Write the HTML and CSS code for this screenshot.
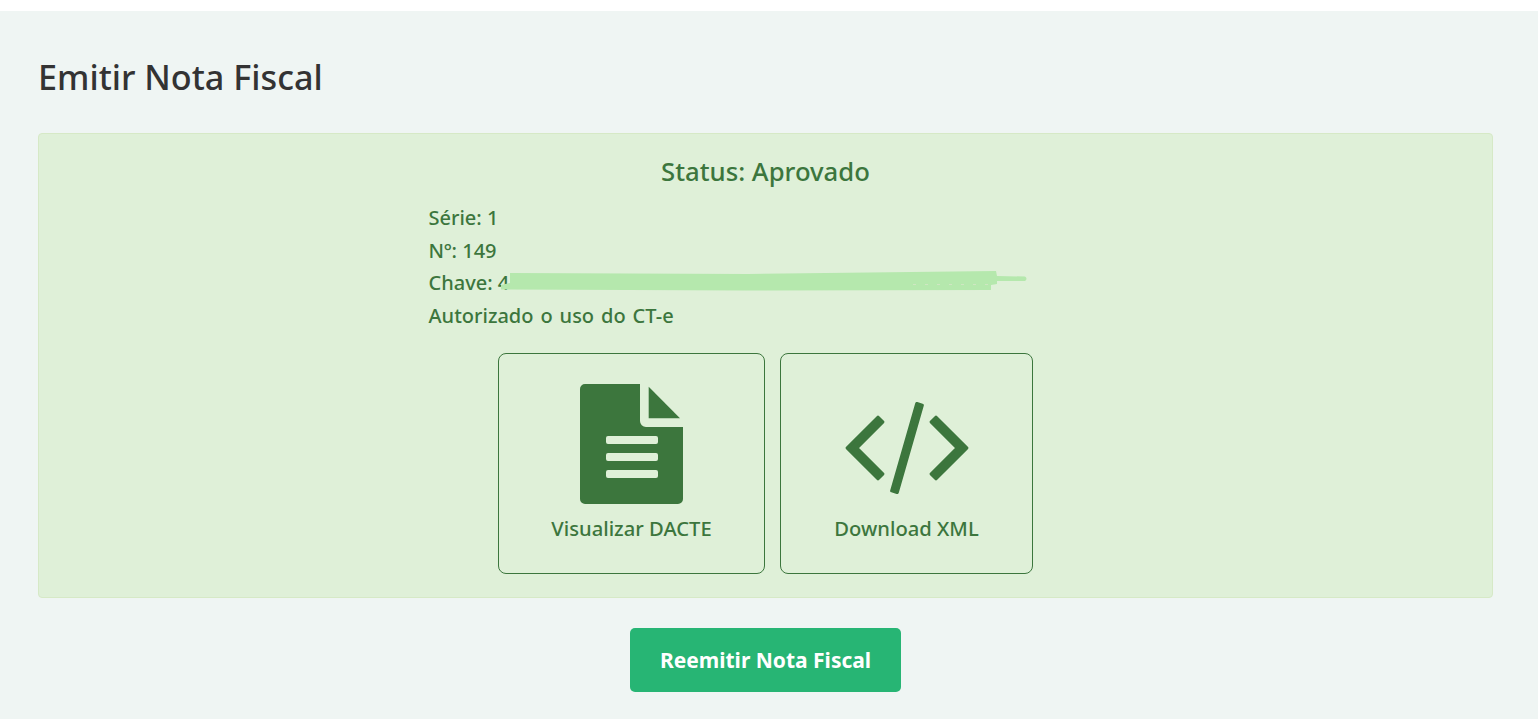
FILE: index.html
```html
<!DOCTYPE html>
<html lang="en">
<head>
  <meta charset="UTF-8">
  <meta name="viewport" content="width=device-width, initial-scale=1.0">
  <title>Emitir Nota Fiscal</title>
  <link rel="stylesheet" href="styles.css">
</head>
<body>
  <div class="page">
    <h1>Emitir Nota Fiscal</h1>
    <div class="alert-success">
      <h2>Status: Aprovado</h2>
      <div class="info">
        <p>Série: 1</p>
        <p>Nº: 149</p>
        <p class="chave">Chave: 4
          <svg class="smear" width="530" height="20" viewBox="0 0 530 20">
            <path d="M12 2 L250 3 L498 0 L499 5 L527 5.5 Q530 7.5 527 10 L499 10 L499 13 L493 14 L493 19 L250 19.5 L3 18.5 L3 14 L12 12 Z"/>
            <path class="smear-dots" d="M415 13.5H490"/>
          </svg>
        </p>
        <p class="autorizado">Autorizado o uso do CT-e</p>
      </div>
      <div class="downloads">
        <a class="doc-btn dacte" href="#">
          <svg class="icon" width="103" height="120" viewBox="0 0 103 120">
            <path fill-rule="evenodd" d="M5 0H60V37a6 6 0 0 0 6 6H103V115a5 5 0 0 1-5 5H5a5 5 0 0 1-5-5V5a5 5 0 0 1 5-5ZM28 52a2 2 0 0 0-2 2v4a2 2 0 0 0 2 2H76a2 2 0 0 0 2-2v-4a2 2 0 0 0-2-2ZM28 69a2 2 0 0 0-2 2v4a2 2 0 0 0 2 2H76a2 2 0 0 0 2-2v-4a2 2 0 0 0-2-2ZM28 86a2 2 0 0 0-2 2v4a2 2 0 0 0 2 2H76a2 2 0 0 0 2-2v-4a2 2 0 0 0-2-2Z"/>
            <path d="M68.7 2.7 100 34.3H68.7Z"/>
          </svg>
          <span>Visualizar DACTE</span>
        </a>
        <a class="doc-btn xml" href="#">
          <svg class="icon" width="124" height="92" viewBox="0 0 124 92">
            <path class="code-line" d="M2.4 46 33 15.4 37.6 20 11.6 46 37.6 72 33 76.6Z"/>
            <path class="code-line" d="M121.6 46 91 15.4 86.4 20 112.4 46 86.4 72 91 76.6Z"/>
            <path class="code-line" d="M77.1 3.3 71.9 1.7 46.9 88.7 52.1 90.3Z"/>
          </svg>
          <span>Download XML</span>
        </a>
      </div>
    </div>
    <div class="actions">
      <button class="btn-reemitir">Reemitir Nota Fiscal</button>
    </div>
  </div>
</body>
</html>
```

FILE: styles.css
```css
body {
  margin: 0;
  padding-top: 11px;
  background-color: #fff;
  font-family: "Noto Sans", "Open Sans", sans-serif;
  color: #333;
}
.page {
  height: 708px;
  box-sizing: border-box;
  padding: 41px 45px 0 38px;
  background-color: #eff5f3;
}
h1 {
  margin: 0 0 31px;
  font-size: 34.2px;
  line-height: 50px;
  font-weight: 500;
  color: #333;
}
.alert-success {
  box-sizing: border-box;
  height: 465px;
  padding: 21px 0 0;
  background-color: #dff0d8;
  border: 1px solid #d6e9c6;
  border-radius: 4px;
  color: #3c763d;
}
h2 {
  margin: 0 0 14px;
  text-align: center;
  font-size: 25.7px;
  line-height: 33px;
  font-weight: 500;
}
.info {
  width: 674px;
  margin: 0 auto;
}
.info p {
  margin: 0;
  font-size: 20px;
  line-height: 32.6px;
  font-weight: 500;
}
.info .autorizado {
  word-spacing: 1.75px;
}
.chave {
  position: relative;
}
.smear {
  position: absolute;
  left: 69px;
  top: 4px;
  fill: #b5e8ad;
}
.smear-dots {
  fill: none;
  stroke: #cfe6c2;
  stroke-width: 1;
  stroke-dasharray: 3 9;
}
.downloads {
  display: flex;
  justify-content: center;
  gap: 15px;
  margin-top: 20.4px;
}
.doc-btn {
  box-sizing: border-box;
  height: 221px;
  display: flex;
  flex-direction: column;
  align-items: center;
  border: 1px solid #3c763d;
  border-radius: 8px;
  color: #3c763d;
  text-decoration: none;
  font-size: 20.2px;
  font-weight: 500;
}
.dacte {
  width: 267px;
  padding-top: 30px;
}
.xml {
  width: 253px;
  padding-top: 48px;
}
.icon {
  fill: #3c763d;
  flex-shrink: 0;
}
.dacte span {
  margin-top: 10px;
}
.xml span {
  margin-top: 20px;
}
.code-line {
  stroke: #3c763d;
  stroke-width: 3.5;
  stroke-linejoin: round;
}
.actions {
  display: flex;
  justify-content: center;
  margin-top: 30px;
}
.btn-reemitir {
  width: 271px;
  height: 64px;
  border: 0;
  border-radius: 5px;
  background-color: #27b574;
  color: #fff;
  font-family: inherit;
  font-size: 21px;
  font-weight: 700;
}
```
